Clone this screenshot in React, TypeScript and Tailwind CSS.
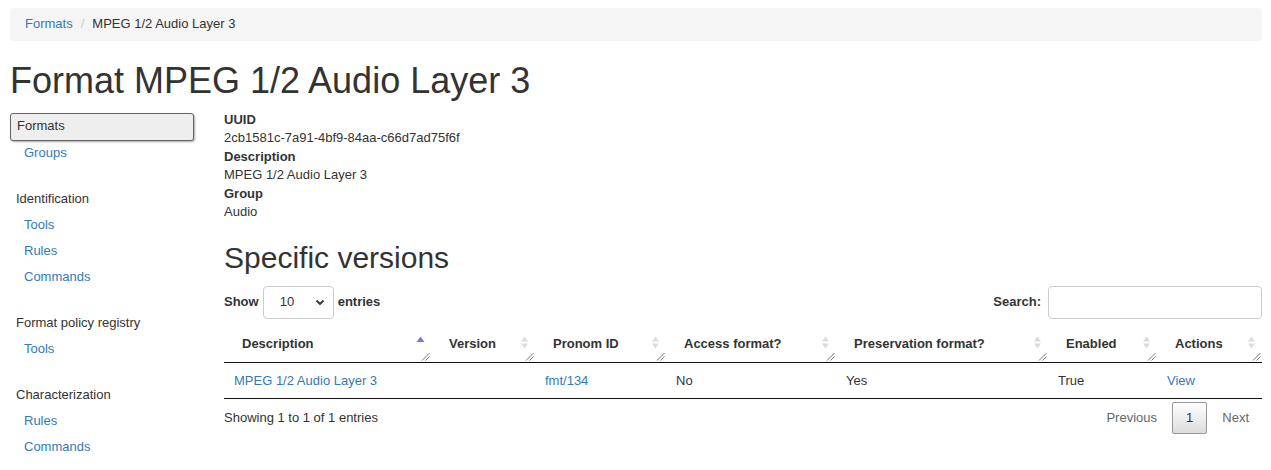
import React from 'react';

const font = { fontFamily: '"Liberation Sans", Arial, sans-serif' };

function SortIcon({ active }: { active?: boolean }) {
  if (active) {
    return (
      <svg width="9" height="14" viewBox="0 0 9 14" className="absolute right-[6px] top-[10px]">
        <polygon points="4.5,0.5 8.5,6 0.5,6" fill="#7a7ad6" />
      </svg>
    );
  }
  return (
    <svg width="9" height="14" viewBox="0 0 9 14" className="absolute right-[6px] top-[10px]">
      <polygon points="4.5,0.5 8,5.5 1,5.5" fill="#dcdcdc" />
      <polygon points="1,7.5 8,7.5 4.5,12.5" fill="#dcdcdc" />
    </svg>
  );
}

function Grip() {
  return (
    <svg width="9" height="9" viewBox="0 0 9 9" className="absolute right-[1px] bottom-[1px]">
      <line x1="1" y1="8.5" x2="8.5" y2="1" stroke="#777" strokeWidth="1" />
      <line x1="4.5" y1="8.5" x2="8.5" y2="4.5" stroke="#777" strokeWidth="1" />
    </svg>
  );
}

export default function App() {
  const columns = [
    { label: 'Description', width: 207, active: true },
    { label: 'Version', width: 104 },
    { label: 'Pronom ID', width: 131 },
    { label: 'Access format?', width: 170 },
    { label: 'Preservation format?', width: 212 },
    { label: 'Enabled', width: 109 },
    { label: 'Actions', width: 105 },
  ];

  const sections = [
    { heading: 'Identification', links: ['Tools', 'Rules', 'Commands'] },
    { heading: 'Format policy registry', links: ['Tools'] },
    { heading: 'Characterization', links: ['Rules', 'Commands'] },
  ];

  return (
    <div className="min-h-[470px] bg-white text-[13px] leading-[1.42857] text-[#333]" style={font}>
      <div className="pl-[10px] pr-[9px] pt-[8px]">
        {/* Breadcrumb */}
        <div className="flex h-[33px] items-center rounded-[4px] bg-[#f5f5f5] px-[15px]">
          <a className="text-[#337ab7]">Formats</a>
          <span className="px-[8px] text-[#ccc]">/</span>
          <span>MPEG 1/2 Audio Layer 3</span>
        </div>

        <h1 className="mt-[20px] mb-[10px] text-[36px] leading-[1.1] font-normal">Format MPEG 1/2 Audio Layer 3</h1>

        <div className="mt-[1px] flex">
          {/* Sidebar */}
          <div className="mt-[2px] w-[184px] shrink-0">
            <div className="flex h-[28px] items-center rounded-[3px] border border-[#666] bg-[#eee] pl-[6px] shadow-[1px_1px_2px_rgba(0,0,0,0.35)]">
              Formats
            </div>
            <div className="flex h-[26px] items-center pl-[14px] text-[#337ab7]">Groups</div>
            {sections.map((s) => (
              <div key={s.heading} className="mt-[20px]">
                <div className="flex h-[26px] items-center pl-[6px]">{s.heading}</div>
                {s.links.map((l) => (
                  <div key={l} className="flex h-[26px] items-center pl-[14px] text-[#337ab7]">{l}</div>
                ))}
              </div>
            ))}
          </div>

          {/* Content */}
          <div className="ml-[30px] flex-1">
            <dl>
              <dt className="font-bold">UUID</dt>
              <dd>2cb1581c-7a91-4bf9-84aa-c66d7ad75f6f</dd>
              <dt className="font-bold">Description</dt>
              <dd>MPEG 1/2 Audio Layer 3</dd>
              <dt className="font-bold">Group</dt>
              <dd>Audio</dd>
            </dl>

            <h2 className="mt-[19px] mb-[12px] text-[30px] leading-[1.1] font-normal">Specific versions</h2>

            <div className="flex h-[33px] items-center justify-between">
              <div className="flex items-center font-bold">
                <span>Show</span>
                <div className="mx-[4px] flex h-[33px] w-[71px] items-center justify-between rounded-[4px] border border-[#ccc] pl-[16px] pr-[8px] font-normal">
                  <span>10</span>
                  <svg width="10" height="7" viewBox="0 0 10 7">
                    <polyline points="1.5,1.5 5,5 8.5,1.5" fill="none" stroke="#333" strokeWidth="1.8" />
                  </svg>
                </div>
                <span>entries</span>
              </div>
              <div className="flex items-center font-bold">
                <span>Search:</span>
                <div className="ml-[7px] h-[33px] w-[214px] rounded-[4px] border border-[#ccc]" />
              </div>
            </div>

            <table className="mt-[7px] w-full table-fixed border-collapse">
              <colgroup>
                {columns.map((c) => (
                  <col key={c.label} style={{ width: c.width }} />
                ))}
              </colgroup>
              <thead>
                <tr className="border-b border-[#111]">
                  {columns.map((c) => (
                    <th key={c.label} className="relative h-[37px] pl-[18px] pr-[20px] text-left font-bold">
                      {c.label}
                      <SortIcon active={c.active} />
                      <Grip />
                    </th>
                  ))}
                </tr>
              </thead>
              <tbody>
                <tr className="border-b border-[#111]">
                  <td className="h-[36px] px-[10px] text-[#337ab7]">MPEG 1/2 Audio Layer 3</td>
                  <td className="px-[10px]"></td>
                  <td className="px-[10px] text-[#337ab7]">fmt/134</td>
                  <td className="px-[10px]">No</td>
                  <td className="px-[10px]">Yes</td>
                  <td className="px-[10px]">True</td>
                  <td className="px-[10px] text-[#337ab7]">View</td>
                </tr>
              </tbody>
            </table>

            <div className="mt-[3px] flex h-[32px] items-center justify-between">
              <span>Showing 1 to 1 of 1 entries</span>
              <div className="flex items-center">
                <span className="px-[13px] text-[#666]">Previous</span>
                <span className="ml-[2px] flex h-[32px] items-center rounded-[2px] border border-[#979797] bg-gradient-to-b from-white to-[#dcdcdc] px-[13px]">
                  1
                </span>
                <span className="ml-[2px] px-[13px] text-[#666]">Next</span>
              </div>
            </div>
          </div>
        </div>
      </div>
    </div>
  );
}
